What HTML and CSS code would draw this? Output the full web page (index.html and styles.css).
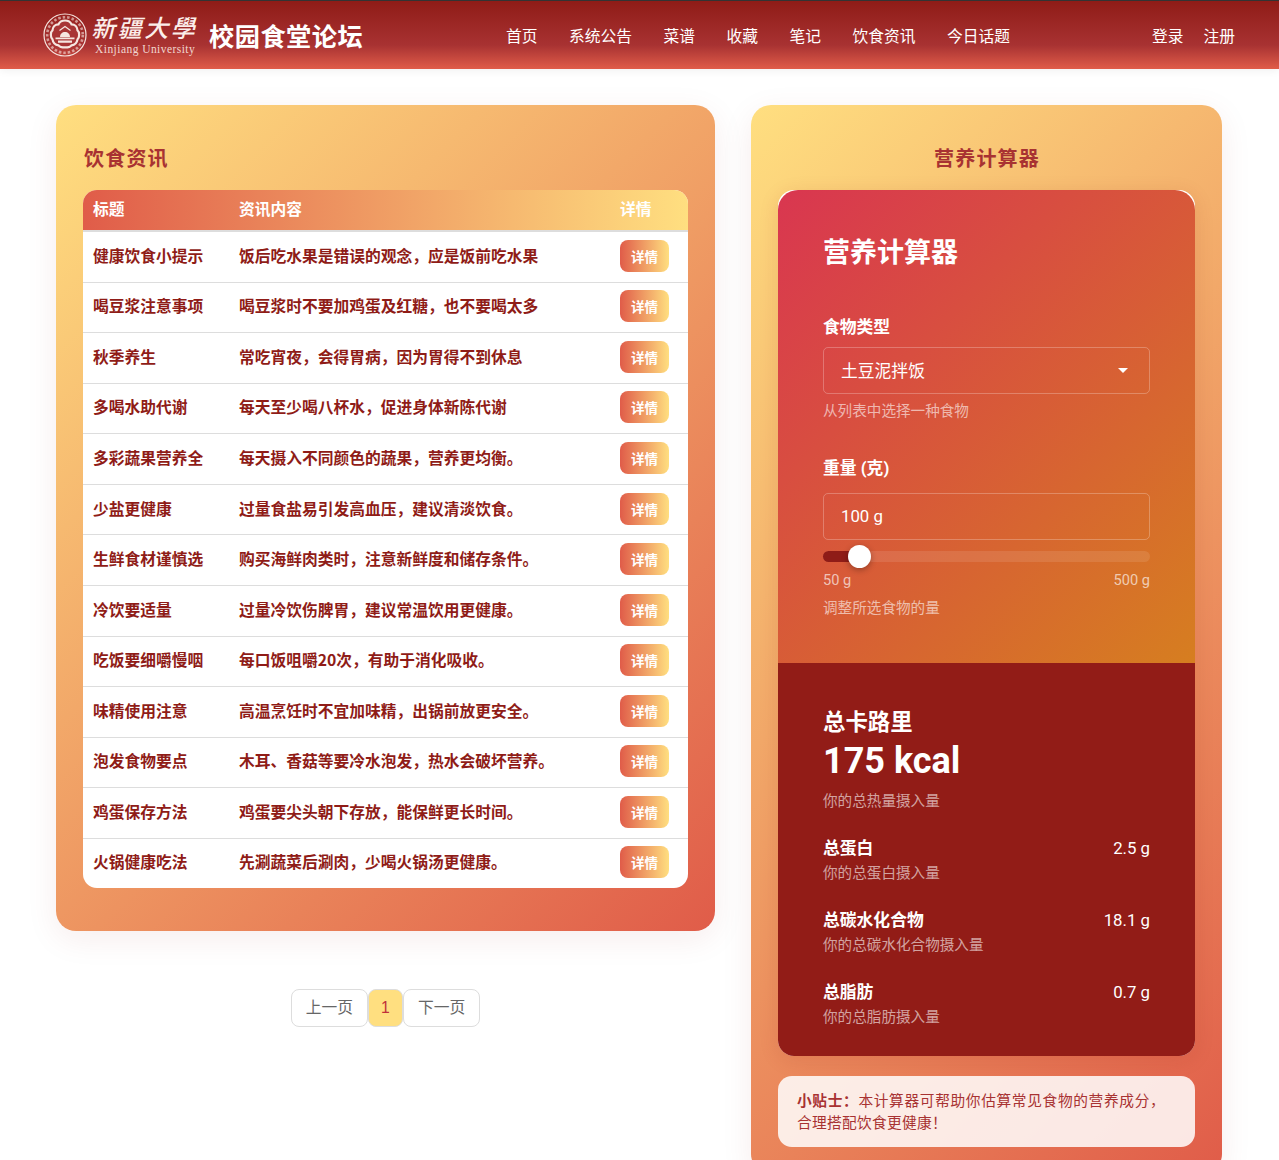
FILE: index.html
```html
<!DOCTYPE html>
<html lang="zh-CN">

<head>
    <meta charset="UTF-8" />
    <title>校园食堂论坛</title>
    <link rel="stylesheet" href="styles.css">
</head>

<body>
    <header class="topbar">
        <div class="brand">
            <svg class="seal" viewBox="0 0 44 44" width="44" height="44">
                <circle cx="22" cy="22" r="21" fill="none" stroke="#f6e6e0" stroke-width="1.2" />
                <circle cx="22" cy="22" r="17.8" fill="none" stroke="#f6e6e0" stroke-width="2.6" stroke-dasharray="2.500 2" opacity="0.6" />
                <path d="M22 7.500c3.300 0 5.500 1.600 6.500 3.800 3.300 0.100 5.800 2.700 6 6 2.200 1.600 2.200 7.400 0 9-0.500 3.300-2.700 5.500-6 6-2 2.800-11 2.800-13 0-3.300-0.500-5.500-2.700-6-6-2.200-1.600-2.200-7.400 0-9 0.200-3.300 2.700-5.900 6-6 1-2.200 3.200-3.800 6.500-3.800z" fill="#a83535" stroke="#f6e6e0" stroke-width="2.200" />
                <path d="M16.500 17.500l5.500-4 5.500 4" fill="none" stroke="#f6e6e0" stroke-width="1.200" />
                <path d="M17 24c0-3 2.200-5 5-5s5 2 5 5z" fill="#f6e6e0" />
                <path d="M12.500 24.500h19v1.800h-19zM15 27.500h14v2.200H15z" fill="#f6e6e0" />
            </svg>
            <div class="school">
                <span class="school-cn">新疆大學</span>
                <span class="school-en">Xinjiang University</span>
            </div>
            <span class="site-name">校园食堂论坛</span>
        </div>
        <nav class="nav">
            <a href="#">首页</a>
            <a href="#">系统公告</a>
            <a href="#">菜谱</a>
            <a href="#">收藏</a>
            <a href="#">笔记</a>
            <a href="#">饮食资讯</a>
            <a href="#">今日话题</a>
        </nav>
        <div class="auth">
            <a href="#">登录</a>
            <a href="#">注册</a>
        </div>
    </header>

    <main class="page">
        <div class="left-col">
            <section class="card card-news">
                <h2 class="card-title">饮食资讯</h2>
                <table class="news">
                    <thead>
                        <tr>
                            <th class="col-title">标题</th>
                            <th class="col-text">资讯内容</th>
                            <th class="col-more">详情</th>
                        </tr>
                    </thead>
                    <tbody>
                        <tr><td>健康饮食小提示</td><td>饭后吃水果是错误的观念，应是饭前吃水果</td><td><button type="button">详情</button></td></tr>
                        <tr><td>喝豆浆注意事项</td><td>喝豆浆时不要加鸡蛋及红糖，也不要喝太多</td><td><button type="button">详情</button></td></tr>
                        <tr><td>秋季养生</td><td>常吃宵夜，会得胃病，因为胃得不到休息</td><td><button type="button">详情</button></td></tr>
                        <tr><td>多喝水助代谢</td><td>每天至少喝八杯水，促进身体新陈代谢</td><td><button type="button">详情</button></td></tr>
                        <tr><td>多彩蔬果营养全</td><td>每天摄入不同颜色的蔬果，营养更均衡。</td><td><button type="button">详情</button></td></tr>
                        <tr><td>少盐更健康</td><td>过量食盐易引发高血压，建议清淡饮食。</td><td><button type="button">详情</button></td></tr>
                        <tr><td>生鲜食材谨慎选</td><td>购买海鲜肉类时，注意新鲜度和储存条件。</td><td><button type="button">详情</button></td></tr>
                        <tr><td>冷饮要适量</td><td>过量冷饮伤脾胃，建议常温饮用更健康。</td><td><button type="button">详情</button></td></tr>
                        <tr><td>吃饭要细嚼慢咽</td><td>每口饭咀嚼20次，有助于消化吸收。</td><td><button type="button">详情</button></td></tr>
                        <tr><td>味精使用注意</td><td>高温烹饪时不宜加味精，出锅前放更安全。</td><td><button type="button">详情</button></td></tr>
                        <tr><td>泡发食物要点</td><td>木耳、香菇等要冷水泡发，热水会破坏营养。</td><td><button type="button">详情</button></td></tr>
                        <tr><td>鸡蛋保存方法</td><td>鸡蛋要尖头朝下存放，能保鲜更长时间。</td><td><button type="button">详情</button></td></tr>
                        <tr><td>火锅健康吃法</td><td>先涮蔬菜后涮肉，少喝火锅汤更健康。</td><td><button type="button">详情</button></td></tr>
                    </tbody>
                </table>
            </section>
            <div class="pager">
                <a href="#">上一页</a>
                <a href="#" class="current">1</a>
                <a href="#">下一页</a>
            </div>
        </div>

        <aside class="card card-side">
            <h2 class="card-title centered">营养计算器</h2>
            <div class="calc">
                <div class="calc-form">
                    <h3 class="calc-title">营养计算器</h3>
                    <label class="field-label">食物类型</label>
                    <div class="box box-select">
                        <span>土豆泥拌饭</span>
                        <i class="caret"></i>
                    </div>
                    <p class="hint">从列表中选择一种食物</p>
                    <label class="field-label second">重量 (克)</label>
                    <div class="box">100 g</div>
                    <div class="slider">
                        <div class="slider-fill"></div>
                        <div class="slider-thumb"></div>
                    </div>
                    <div class="slider-range">
                        <span>50 g</span>
                        <span>500 g</span>
                    </div>
                    <p class="hint hint-last">调整所选食物的量</p>
                </div>
                <div class="calc-result">
                    <div class="total-label">总卡路里</div>
                    <div class="total-value">175 kcal</div>
                    <p class="result-note">你的总热量摄入量</p>
                    <div class="nutrient">
                        <div class="nutrient-row"><strong>总蛋白</strong><span>2.5 g</span></div>
                        <p class="result-note">你的总蛋白摄入量</p>
                    </div>
                    <div class="nutrient">
                        <div class="nutrient-row"><strong>总碳水化合物</strong><span>18.1 g</span></div>
                        <p class="result-note">你的总碳水化合物摄入量</p>
                    </div>
                    <div class="nutrient">
                        <div class="nutrient-row"><strong>总脂肪</strong><span>0.7 g</span></div>
                        <p class="result-note">你的总脂肪摄入量</p>
                    </div>
                </div>
            </div>
            <div class="tip"><strong>小贴士：</strong>本计算器可帮助你估算常见食物的营养成分，合理搭配饮食更健康！</div>
        </aside>
    </main>
</body>

</html>
```

FILE: styles.css
```css
* {
    box-sizing: border-box;
    margin: 0;
    padding: 0;
}

html,
body {
    height: 100%;
    overflow: hidden;
}

body {
    background: #fff;
    font-family: "Liberation Sans", "Noto Sans CJK SC", sans-serif;
}

a {
    color: inherit;
    text-decoration: none;
}

.topbar {
    align-items: center;
    background: linear-gradient(#8f1c17 0%, #a83232 65%, #e05c49 100%);
    border-top: 1px solid #333;
    box-shadow: 0 2px 8px rgba(0, 0, 0, 0.06);
    color: #fff;
    display: flex;
    height: 69px;
    padding: 0 43px;
    position: relative;
}

.brand {
    align-items: center;
    display: flex;
    width: 463px;
}

.seal {
    flex: none;
}

.school {
    display: flex;
    flex-direction: column;
    margin-left: 6px;
    margin-top: -2px;
    width: 116px;
}

.school-cn {
    color: #fbeeea;
    display: block;
    font-family: "Noto Sans CJK SC", sans-serif;
    font-size: 24px;
    font-weight: 500;
    letter-spacing: 2.5px;
    line-height: 30px;
    margin-left: -3px;
    transform: skewX(-14deg);
    transform-origin: left bottom;
    white-space: nowrap;
}

.school-en {
    color: #f1d6d0;
    font-family: "Liberation Serif", serif;
    font-size: 11.5px;
    letter-spacing: 0.45px;
    line-height: 13px;
    margin-left: 2px;
    margin-top: 1px;
    white-space: nowrap;
}

.site-name {
    font-family: "Noto Sans CJK SC", sans-serif;
    font-size: 25.2px;
    font-weight: 700;
    letter-spacing: 0.5px;
    white-space: nowrap;
}

.nav {
    display: flex;
    flex: 1;
    font-size: 15.75px;
    gap: 31.5px;
}

.auth {
    display: flex;
    font-size: 15.75px;
    gap: 20px;
    margin-right: 1px;
}

.page {
    align-items: flex-start;
    display: grid;
    gap: 36px;
    grid-template-columns: 659px 471px;
    padding: 36px 56px 0;
}

.card {
    background: linear-gradient(135deg, #ffdf80, #e05c49);
    border-radius: 20px;
    box-shadow: 0 8px 32px rgba(143, 28, 23, 0.08);
    padding: 27px;
}

.card-news {
    padding-bottom: 43px;
}

.card-title {
    color: #a83232;
    font-family: "Noto Sans CJK SC", sans-serif;
    font-size: 20px;
    font-weight: 700;
    letter-spacing: 1.2px;
    line-height: 30px;
    margin-bottom: 17px;
    margin-top: 11px;
    padding-left: 1px;
}

.centered {
    text-align: center;
}

.news {
    background: #fff;
    border-collapse: separate;
    border-radius: 14px;
    border-spacing: 0;
    color: #8f1c17;
    font-family: "Noto Sans CJK SC", sans-serif;
    font-size: 15.75px;
    font-weight: 600;
    height: 698px;
    overflow: hidden;
    table-layout: fixed;
    width: 100%;
}

.news thead tr {
    background: linear-gradient(90deg, #e05c49, #ffdf80);
    color: #fff;
}

.news th {
    border-bottom: 2px solid #ddd;
    font-weight: 700;
    height: 42px;
    padding: 0 10px 3px;
    text-align: left;
}

.col-title {
    width: 146px;
}

.col-more {
    width: 78px;
    padding-left: 11px;
}

.news td {
    border-bottom: 1px solid #ddd;
    padding: 0 10px 3px;
    white-space: nowrap;
}

.news td:last-child {
    padding-bottom: 2px;
}

.news tr:last-child td {
    border-bottom: 0;
}

.news button {
    background: linear-gradient(90deg, #e05c49, #ffdf80);
    border: 0;
    border-radius: 8px;
    color: #fff;
    display: block;
    font-family: "Noto Sans CJK SC", sans-serif;
    font-size: 13.5px;
    font-weight: 700;
    height: 32px;
    width: 49px;
}

.pager {
    color: #666;
    display: flex;
    font-size: 15.75px;
    justify-content: center;
    margin-top: 58px;
}

.pager a {
    align-items: center;
    background: #fff;
    border: 1px solid #ddd;
    border-radius: 8px;
    display: flex;
    height: 38px;
    padding: 0 13.5px 3px;
}

.pager .current {
    background: #ffdf80;
    color: #c0303a;
    padding: 0 12.6px 1px;
}

.calc {
    background: #fff;
    border-radius: 16px;
    box-shadow: 0 4px 20px rgba(143, 28, 23, 0.12);
    overflow: hidden;
}

.calc-form {
    background: linear-gradient(135deg, #d93650, #d67e20);
    border-radius: 20px 20px 0 0;
    color: #fff;
    height: 473px;
    padding: 43px 45px 0;
}

.calc-title {
    font-family: "Noto Sans CJK SC", sans-serif;
    font-size: 27px;
    font-weight: 700;
    line-height: 36px;
    margin-bottom: 48px;
}

.field-label {
    display: block;
    font-family: "Roboto", "Noto Sans CJK SC", sans-serif;
    font-size: 16.8px;
    font-weight: 700;
    line-height: 20px;
    margin-bottom: 10px;
}

.second {
    margin-top: 37px;
    margin-bottom: 15px;
}

.box {
    align-items: center;
    border: 1px solid rgba(255, 255, 255, 0.25);
    border-radius: 5px;
    display: flex;
    font-family: "Roboto", "Noto Sans CJK SC", sans-serif;
    font-size: 16.8px;
    height: 47px;
    padding: 0 17px 2px;
}

.box-select {
    justify-content: space-between;
}

.caret {
    border-left: 5px solid transparent;
    border-right: 5px solid transparent;
    border-top: 5px solid #fff;
    margin-right: 4px;
    margin-top: 2px;
}

.hint {
    color: rgba(255, 255, 255, 0.6);
    font-family: "Roboto", "Noto Sans CJK SC", sans-serif;
    font-size: 14.6px;
    line-height: 20px;
    margin-top: 7px;
}

.hint-last {
    margin-top: 8px;
}

.slider {
    background: rgba(255, 255, 255, 0.1);
    border-radius: 6px;
    height: 11px;
    margin-top: 11px;
    position: relative;
}

.slider-fill {
    background: #8f1c17;
    border-radius: 6px;
    height: 100%;
    width: 36px;
}

.slider-thumb {
    background: #fff;
    border-radius: 50%;
    box-shadow: 0 2px 6px rgba(0, 0, 0, 0.3);
    height: 23px;
    left: 25px;
    position: absolute;
    top: -6px;
    width: 23px;
}

.slider-range {
    color: rgba(255, 255, 255, 0.65);
    display: flex;
    font-family: "Roboto", sans-serif;
    font-size: 14.6px;
    justify-content: space-between;
    line-height: 20px;
    margin-top: 8px;
}

.calc-result {
    background: #921c17;
    color: #fff;
    height: 393px;
    padding: 45px 45px 0;
}

.total-label {
    font-family: "Roboto", "Noto Sans CJK SC", sans-serif;
    font-size: 22.4px;
    font-weight: 700;
    line-height: 28px;
    margin-bottom: 1px;
}

.total-value {
    font-family: "Roboto", sans-serif;
    font-size: 36px;
    font-weight: 700;
    line-height: 48px;
}

.result-note {
    color: rgba(255, 255, 255, 0.6);
    font-family: "Roboto", "Noto Sans CJK SC", sans-serif;
    font-size: 14.6px;
    line-height: 20px;
    margin-top: 6px;
}

.nutrient {
    margin-top: 26px;
}

.nutrient-row {
    display: flex;
    font-family: "Roboto", "Noto Sans CJK SC", sans-serif;
    font-size: 16.8px;
    justify-content: space-between;
    line-height: 22px;
}

.nutrient .result-note {
    margin-top: 4px;
}

.tip {
    background: rgba(255, 255, 255, 0.85);
    border-radius: 14px;
    color: #a83232;
    font-family: "Noto Sans CJK SC", sans-serif;
    font-size: 14.7px;
    letter-spacing: 0.3px;
    line-height: 22px;
    margin-top: 20px;
    padding: 13px 30px 14px 19px;
    text-align: justify;
}
```
